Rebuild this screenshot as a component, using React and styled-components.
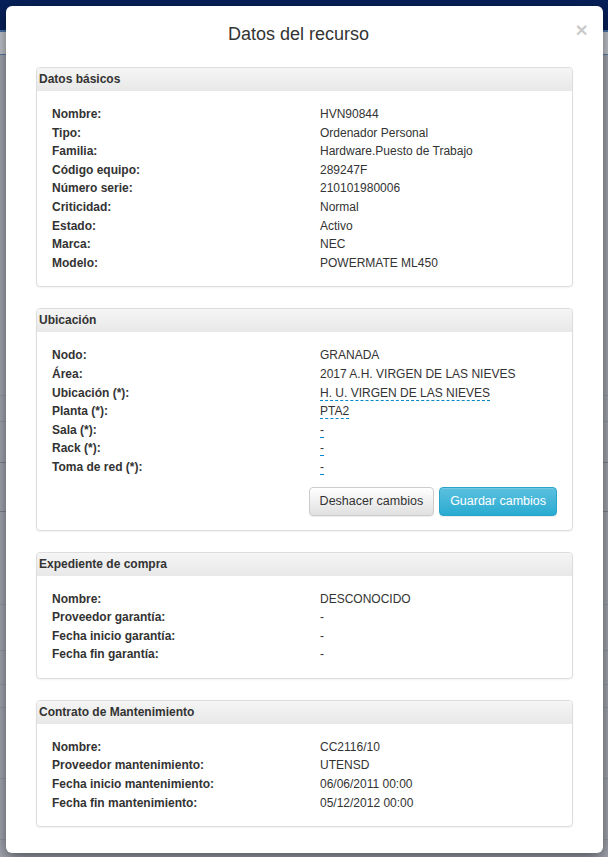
import React from "react";
import styled, { createGlobalStyle } from "styled-components";

const Global = createGlobalStyle`
  html, body { margin: 0; padding: 0; }
  body {
    background: #a4a7b1;
    font-family: "Liberation Sans", Arial, Helvetica, sans-serif;
    color: #333;
    overflow: hidden;
  }
`;

const Page = styled.div`
  position: relative;
  width: 608px;
  height: 857px;
  overflow: hidden;
`;

const NavBar = styled.div`
  height: 30px;
  background: #07205a;
`;

const SubNav = styled.div`
  height: 22px;
  background: #c2c5cc;
  border-top: 2px solid #4a74aa;
  border-bottom: 1px solid #5a7cab;
`;

const BgTable = styled.div`
  display: flex;
  flex-direction: column;
`;

const BgRow = styled.div`
  height: ${(p) => p.$h}px;
  border-bottom: 1px solid ${(p) => (p.$dark ? "#7f838f" : "#959aa6")};
`;

const Modal = styled.div`
  position: absolute;
  top: 6px;
  left: 6px;
  width: 597px;
  background: #fff;
  border-radius: 6px;
  box-shadow: 0 5px 15px rgba(0, 0, 0, 0.5);
  display: flex;
  flex-direction: column;
`;

const Header = styled.div`
  display: flex;
  align-items: flex-start;
  padding: 18px 16px 0 15px;
  height: 43px;
`;

const Title = styled.h3`
  flex: 1;
  margin: 0;
  text-align: center;
  font-size: 18px;
  line-height: 20px;
  font-weight: normal;
  color: #333;
`;

const Close = styled.button`
  width: 11px;
  padding: 0;
  border: 0;
  background: none;
  font-family: "Liberation Sans", Arial, sans-serif;
  font-size: 21px;
  font-weight: bold;
  line-height: 20px;
  color: #000;
  opacity: 0.2;
  margin-top: -4px;
  display: flex;
  justify-content: center;
  cursor: pointer;
`;

const Body = styled.div`
  padding: 0 30px 26px 30px;
  display: flex;
  flex-direction: column;
  gap: 21px;
`;

const Panel = styled.section`
  border: 1px solid #ddd;
  border-radius: 4px;
  background: #fff;
  box-shadow: 0 1px 2px rgba(0, 0, 0, 0.05);
  overflow: hidden;
`;

const PanelHeading = styled.div`
  height: 23px;
  line-height: 23px;
  padding: 0 2px;
  font-size: 12px;
  font-weight: bold;
  color: #333;
  background: linear-gradient(to bottom, #f5f5f5 0%, #e8e8e8 100%);
`;

const PanelBody = styled.div`
  padding: 14px 15px 14px 15px;
  display: flex;
  flex-direction: column;
`;

const Fields = styled.dl`
  margin: 0;
  display: grid;
  grid-template-columns: 268px 1fr;
  font-size: 12px;
  line-height: 18.6px;
`;

const Label = styled.dt`
  font-weight: bold;
  color: #333;
  margin: 0;
`;

const Value = styled.dd`
  margin: 0;
  color: #333;
`;

const Editable = styled.span`
  border-bottom: 1px dashed #0088cc;
  cursor: pointer;
`;

const Actions = styled.div`
  display: flex;
  justify-content: flex-end;
  gap: 5px;
  margin-top: 10px;
`;

const Button = styled.button`
  height: 29px;
  padding: 0 10px;
  border-radius: 4px;
  font-family: "Liberation Sans", Arial, sans-serif;
  font-size: 12.5px;
  cursor: pointer;
  border: 1px solid ${(p) => (p.$primary ? "#28a4c9" : "#ccc")};
  color: ${(p) => (p.$primary ? "#fff" : "#333")};
  background: ${(p) =>
    p.$primary
      ? "linear-gradient(to bottom, #5bc0de 0%, #2aabd2 100%)"
      : "linear-gradient(to bottom, #fff 0%, #e0e0e0 100%)"};
  box-shadow: inset 0 1px 0 rgba(255, 255, 255, 0.15), 0 1px 1px rgba(0, 0, 0, 0.075);
`;

const sections = [
  {
    title: "Datos básicos",
    rows: [
      ["Nombre:", "HVN90844"],
      ["Tipo:", "Ordenador Personal"],
      ["Familia:", "Hardware.Puesto de Trabajo"],
      ["Código equipo:", "289247F"],
      ["Número serie:", "210101980006"],
      ["Criticidad:", "Normal"],
      ["Estado:", "Activo"],
      ["Marca:", "NEC"],
      ["Modelo:", "POWERMATE ML450"],
    ],
  },
  {
    title: "Ubicación",
    editable: true,
    rows: [
      ["Nodo:", "GRANADA"],
      ["Área:", "2017 A.H. VIRGEN DE LAS NIEVES"],
      ["Ubicación (*):", "H. U. VIRGEN DE LAS NIEVES", true],
      ["Planta (*):", "PTA2", true],
      ["Sala (*):", "-", true],
      ["Rack (*):", "-", true],
      ["Toma de red (*):", "-", true],
    ],
  },
  {
    title: "Expediente de compra",
    rows: [
      ["Nombre:", "DESCONOCIDO"],
      ["Proveedor garantía:", "-"],
      ["Fecha inicio garantía:", "-"],
      ["Fecha fin garantía:", "-"],
    ],
  },
  {
    title: "Contrato de Mantenimiento",
    rows: [
      ["Nombre:", "CC2116/10"],
      ["Proveedor mantenimiento:", "UTENSD"],
      ["Fecha inicio mantenimiento:", "06/06/2011 00:00"],
      ["Fecha fin mantenimiento:", "05/12/2012 00:00"],
    ],
  },
];

const bgRows = [
  [340, false], [25, false], [40, true], [48, true], [92, false], [45, false],
  [33, false], [22, false], [70, false], [60, false],
];

export default function App() {
  return (
    <>
      <Global />
      <Page>
        <NavBar />
        <SubNav />
        <BgTable>
          {bgRows.map(([h, d], i) => (
            <BgRow key={i} $h={h} $dark={d} />
          ))}
        </BgTable>
        <Modal>
          <Header>
            <Title>Datos del recurso</Title>
            <Close aria-label="Cerrar">×</Close>
          </Header>
          <Body>
            {sections.map((s) => (
              <Panel key={s.title}>
                <PanelHeading>{s.title}</PanelHeading>
                <PanelBody>
                  <Fields>
                    {s.rows.map(([l, v, ed]) => (
                      <React.Fragment key={l}>
                        <Label>{l}</Label>
                        <Value>{ed ? <Editable>{v}</Editable> : v}</Value>
                      </React.Fragment>
                    ))}
                  </Fields>
                  {s.editable && (
                    <Actions>
                      <Button>Deshacer cambios</Button>
                      <Button $primary>Guardar cambios</Button>
                    </Actions>
                  )}
                </PanelBody>
              </Panel>
            ))}
          </Body>
        </Modal>
      </Page>
    </>
  );
}
